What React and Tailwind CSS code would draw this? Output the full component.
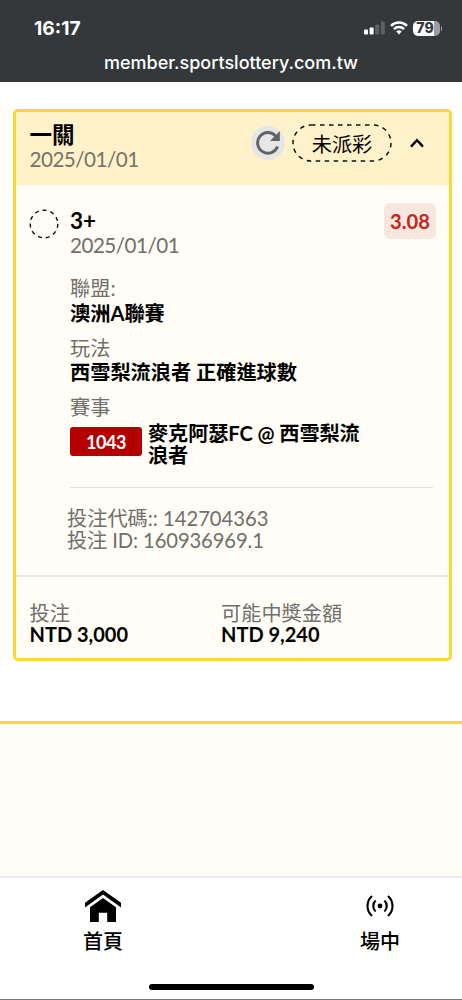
import { useState } from "react";

const ticket = {
  title: "一關",
  date: "2025/01/01",
  status: "未派彩",
  odds: "3.08",
  pick: "3+",
  league: "澳洲A聯賽",
  market: "西雪梨流浪者 正確進球數",
  eventCode: "1043",
  event: "麥克阿瑟FC @ 西雪梨流浪者",
  betCode: "142704363",
  betId: "160936969.1",
  stake: "NTD 3,000",
  payout: "NTD 9,240",
};

function StatusBar() {
  return (
    <header className="h-[82px] bg-[#34383b] text-white font-['Inter','Liberation_Sans',sans-serif]">
      <div className="flex items-center justify-between pt-[17px] pl-[34px] pr-[20px]">
        <span className="text-[19.2px] leading-[22px] font-bold">16:17</span>
        <div className="flex items-center gap-[5px]">
          {/* Signal */}
          <svg width="21" height="14" viewBox="0 0 21 14" fill="#fff">
            <rect x="0" y="8.5" width="4" height="5" rx="1" />
            <rect x="5.6" y="6.5" width="4" height="7" rx="1" />
            <rect x="11.2" y="3.5" width="4" height="10" rx="1" fill="#5e6163" />
            <rect x="16.8" y="0.5" width="4" height="13" rx="1" fill="#5e6163" />
          </svg>
          {/* Wifi */}
          <svg width="18" height="14" viewBox="0 0 18 14" fill="none" stroke="#fff" strokeWidth="2.5">
            <path d="M1 4.9a11.4 11.4 0 0 1 16 0" />
            <path d="M3.9 8.1a7.3 7.3 0 0 1 10.2 0" />
            <path d="M9 13.4 6.2 10.5a4 4 0 0 1 5.6 0z" fill="#fff" stroke="none" />
          </svg>
          <div className="flex items-center gap-px">
            <div className="flex h-[15px] w-[27px] items-center justify-center rounded-[5px] bg-[linear-gradient(90deg,#fff_79%,#9b9d9e_79%)] text-[14px] font-extrabold leading-none text-[#34383b]">
              <span className="-ml-0.5">79</span>
            </div>
            <div className="h-[5px] w-[1.5px] rounded-r bg-[#9b9d9e]"></div>
          </div>
        </div>
      </div>
      <p className="mt-3 text-center text-[18px] leading-6 font-medium">
        member.sportslottery.com.tw
      </p>
    </header>
  );
}

function Field({ label, value }) {
  return (
    <div className="mb-[10.5px]">
      <p className="leading-[24.5px] text-[#6f6f6c]">{label}</p>
      <p className="leading-[24.5px] font-bold">{value}</p>
    </div>
  );
}

function NavItem({ label, children }) {
  return (
    <button className="flex w-[206px] flex-col items-center">
      <span className="flex h-[34px] items-center">{children}</span>
      <span className="mt-[6px] text-[20px] leading-6 font-medium">{label}</span>
    </button>
  );
}

export default function App() {
  const [open, setOpen] = useState(true);

  return (
    <div className="flex h-[1000px] w-[462px] flex-col overflow-hidden bg-white text-black font-['Lato','Noto_Sans_CJK_TC',sans-serif]">
      <StatusBar />

      {/* Ticket card */}
      <main className="mt-[27px] mr-[10px] ml-[13px] h-[552px] shrink-0 rounded-[5px] border-[3px] border-[#ffd72e] bg-[#fffdf5] text-[20.2px]">
        <div className="flex h-[73px] justify-between bg-[#fff1c9] pt-[11px] pr-[25px] pl-[13.5px]">
          <div>
            <h1 className="text-[22.5px] leading-6 font-bold">{ticket.title}</h1>
            <p className="text-[20.6px] leading-[25px] tracking-[-0.5px] text-[#76736a]">{ticket.date}</p>
          </div>
          <div className="flex h-[39px] items-center">
            <button className="flex size-[34px] items-center justify-center rounded-full bg-[#e5e6e7]">
              <svg width="24" height="24" viewBox="0 0 24 24">
                <path d="M21.6 15.4A10.3 10.3 0 1 1 19.6 5" fill="none" stroke="#626262" strokeWidth="2.9" />
                <path d="M23.8 0v10H14z" fill="#626262" />
              </svg>
            </button>
            <div className="relative ml-[7px] flex h-[38px] w-[100px] items-center justify-center">
              <svg className="absolute inset-0" width="100" height="38" fill="none">
                <rect x="1" y="1" width="98" height="36" rx="18" stroke="#111" strokeWidth="1.5" strokeDasharray="4.5 4.5" />
              </svg>
              <span className="pt-0.5 leading-6">{ticket.status}</span>
            </div>
            <button className="ml-[18px]" onClick={() => setOpen(!open)}>
              <svg width="14" height="10" viewBox="0 0 14 10" fill="none" stroke="#000" strokeWidth="2.4">
                <path d="M1 8.6 7 2.2l6 6.4" />
              </svg>
            </button>
          </div>
        </div>

        {open && (
          <section className="flex h-[302px] pt-[18px] pr-[13px] pl-[13px]">
            <svg className="mt-[6px] shrink-0" width="30" height="30" fill="none">
              <circle cx="15" cy="15" r="13.8" stroke="#111" strokeWidth="1.4" strokeDasharray="4 3.9" />
            </svg>
            <div className="ml-[11px] flex-1">
              <div className="flex justify-between">
                <div>
                  <p className="mt-[6px] text-[22.5px] leading-6 font-bold">{ticket.pick}</p>
                  <p className="text-[20.6px] leading-6 tracking-[-0.5px] text-[#6f6f6c]">{ticket.date}</p>
                </div>
                <span className="flex h-[36px] w-[52px] items-center justify-center rounded-md bg-[#f8e7df] font-bold text-[#c1281f]">
                  {ticket.odds}
                </span>
              </div>
              <div className="mt-[19px]">
                <Field label="聯盟:" value={ticket.league} />
                <Field label="玩法" value={ticket.market} />
                <p className="leading-[24.5px] text-[#6f6f6c]">賽事</p>
                <div className="flex items-start">
                  <span className="mt-[7px] h-[29px] w-[72px] shrink-0 rounded-[3px] bg-[#b50000] text-center text-[18px] leading-[30px] tracking-[-0.4px] font-bold text-white">
                    {ticket.eventCode}
                  </span>
                  <p className="mt-[2px] ml-[6px] w-[220px] leading-[22px] tracking-[-0.1px] font-bold">{ticket.event}</p>
                </div>
              </div>
            </div>
          </section>
        )}

        <div className="mr-4 ml-[54px] border-t border-[#e3e0db]"></div>
        <div className="h-[89px] border-b-2 border-[#ece9e3] pt-[19px] pl-[51px] text-[#6f6f6c]">
          <p className="leading-[22px]">投注代碼:: {ticket.betCode}</p>
          <p className="leading-[22px] tracking-[-0.1px]">投注 ID: {ticket.betId}</p>
        </div>

        <footer className="flex pt-[25px] pl-[13.5px]">
          <div className="w-[191.5px]">
            <p className="leading-[22px] text-[#6f6f6c]">投注</p>
            <p className="text-[20px] leading-[21px] font-bold">{ticket.stake}</p>
          </div>
          <div>
            <p className="leading-[22px] text-[#6f6f6c]">可能中獎金額</p>
            <p className="text-[20px] leading-[21px] font-bold">{ticket.payout}</p>
          </div>
        </footer>
      </main>

      <section className="mt-[60px] h-[155px] shrink-0 border-t-[3px] border-[#ffd72e] bg-[#fffdf5]"></section>

      {/* Bottom nav */}
      <nav className="flex-1 border-t-2 border-[#ebebea]">
        <div className="-mr-[21px] flex justify-between pt-[11px]">
          <NavItem label="首頁">
            <svg width="36" height="32" viewBox="0 0 36 32" fill="#000">
              <path d="M18 0 36 12.8v4.7L18 4.6 0 17.5v-4.7z" />
              <path d="M18 8 31 17.3V32h-8.8v-9.2h-8.4V32H5V17.3z" />
            </svg>
          </NavItem>
          <NavItem label="場中">
            <svg width="28" height="22" viewBox="0 0 28 22" fill="none" stroke="#000" strokeWidth="2.1">
              <circle cx="14" cy="11" r="2.4" fill="#000" stroke="none" />
              <path d="M9.6 5.6a7.4 7.4 0 0 0 0 10.8M18.4 5.6a7.4 7.4 0 0 1 0 10.8" />
              <path d="M6 1a13.4 13.4 0 0 0 0 20M22 1a13.4 13.4 0 0 1 0 20" />
            </svg>
          </NavItem>
        </div>
        <div className="mx-auto mt-[31px] h-[6px] w-[165px] rounded-full bg-black"></div>
      </nav>
      <div className="h-px shrink-0 bg-[#777]"></div>
    </div>
  );
}
